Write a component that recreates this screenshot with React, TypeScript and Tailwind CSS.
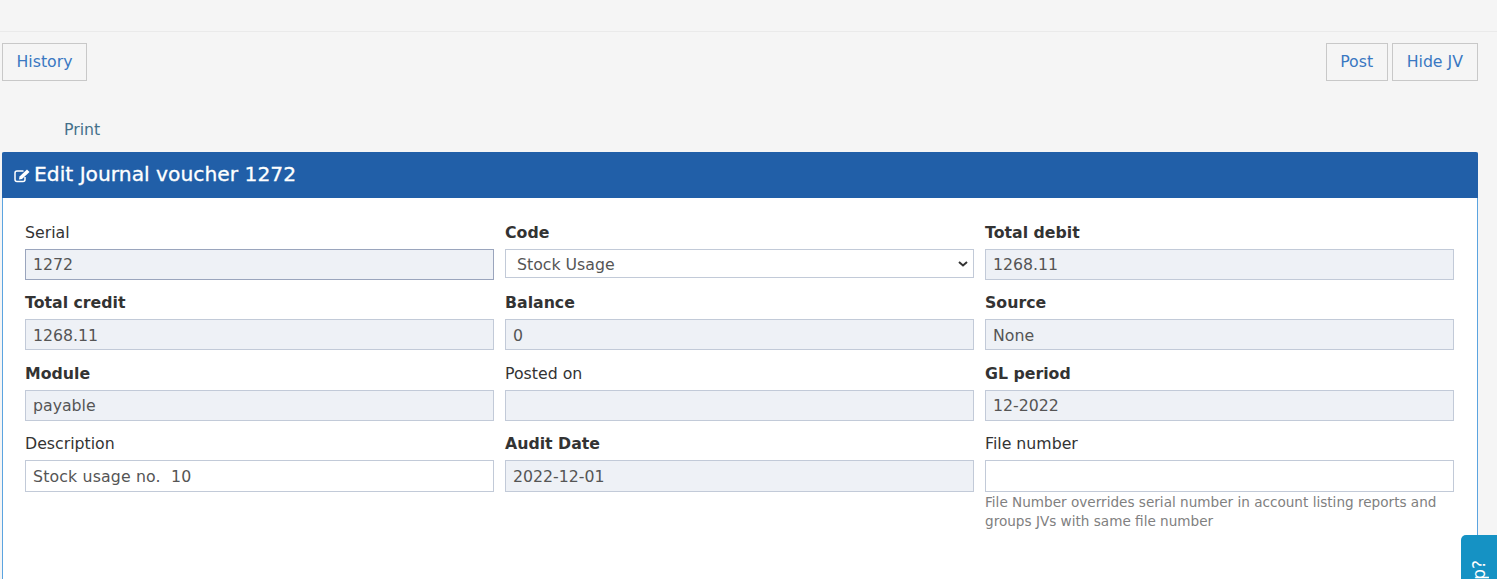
const F = "font-['DejaVu_Sans',sans-serif]";

function Btn({ children, wide }: { children: string; wide?: boolean }) {
  return (
    <button
      className={`h-[38px] border border-[#c8c8c8] text-[15.75px] leading-[20px] text-[#3a78c2] ${
        wide ? "px-[14px]" : "px-[13.5px]"
      }`}
    >
      {children}
    </button>
  );
}

function Label({ text, bold }: { text: string; bold?: boolean }) {
  return (
    <div className={`h-[19px] text-[15.75px] leading-[19px] text-[#333] ${bold ? "font-bold" : ""}`}>{text}</div>
  );
}

function Ro({ text, dark, tall }: { text: string; dark?: boolean; tall?: boolean }) {
  return (
    <div
      className={`mt-[7px] flex items-center border bg-[#eef1f6] px-[7px] text-[15.75px] text-[#555] ${
        tall ? "h-[32px] pt-[0.8px]" : "h-[31px] pt-[1.2px]"
      } ${dark ? "border-[#9aa5bd]" : "border-[#c2cad8]"}`}
    >
      {text}
    </div>
  );
}

function Field({
  label,
  bold,
  value,
  dark,
  tall,
}: {
  label: string;
  bold?: boolean;
  value: string;
  dark?: boolean;
  tall?: boolean;
}) {
  return (
    <div>
      <Label text={label} bold={bold} />
      <Ro text={value} dark={dark} tall={tall} />
    </div>
  );
}

function EditIcon() {
  return (
    <svg width="16" height="14" viewBox="0 0 16 14" fill="none" className="mr-[4px] mt-[4px] shrink-0">
      <path d="M11 8v2.5a2 2 0 0 1-2 2H3a2 2 0 0 1-2-2V4a2 2 0 0 1 2-2h6.5" stroke="#fff" strokeWidth="1.5" />
      <path d="M5.5 7.5 13 .5l2.5 2.5-7.5 7-3 .6z" fill="#fff" />
    </svg>
  );
}

export default function App() {
  return (
    <div className={`${F} relative h-[579px] w-[1497px] overflow-hidden bg-[#f5f5f5]`}>
      <div className="h-[32px] border-b border-[#eaeaea]" />
      <div className="flex justify-between pl-[2px] pr-[19px] pt-[11px]">
        <Btn>History</Btn>
        <div className="flex gap-[4px]">
          <Btn>Post</Btn>
          <Btn wide>Hide JV</Btn>
        </div>
      </div>
      <div className="mt-[39px] h-[32px] pl-[64px] text-[15.75px] leading-[20px] text-[#44708a]">Print</div>
      <div className="ml-[2px] h-[500px] w-[1476px] rounded-t-[2px] border border-t-0 border-[#5ba4e0] bg-white">
        <div className="-mx-px flex h-[46px] items-center rounded-t-[2px] bg-[#215fa8] pb-[2px] pl-[12px] text-[20.25px] font-medium text-white [-webkit-text-stroke:0.3px_white]">
          <EditIcon />
          <span>Edit Journal voucher 1272</span>
        </div>
        <div className="grid grid-cols-[469px_469px_469px] gap-x-[11px] gap-y-[13.5px] pl-[22px] pt-[24.8px]">
          <Field label="Serial" value="1272" dark />
          <div>
            <Label text="Code" bold />
            <div className="relative mt-[7px] flex h-[29px] items-center border border-[#c2cad8] bg-white pl-[11px] pt-[4px] text-[15.75px] text-[#555]">
              Stock Usage
              <svg width="10" height="6" viewBox="0 0 10 6" fill="none" className="absolute right-[5px] top-[11px]">
                <path d="M1 1l4 3.5L9 1" stroke="#333" strokeWidth="2" />
              </svg>
            </div>
          </div>
          <Field label="Total debit" bold value="1268.11" />
          <Field label="Total credit" bold value="1268.11" />
          <Field label="Balance" bold value="0" />
          <Field label="Source" bold value="None" />
          <Field label="Module" bold value="payable" />
          <Field label="Posted on" value="" />
          <Field label="GL period" bold value="12-2022" />
          <div>
            <Label text="Description" />
            <div className="mt-[7px] flex h-[32px] items-center border border-[#c2cad8] bg-white px-[7px] pt-[0.8px] text-[15.75px] tracking-[0.15px] text-[#555]">
              Stock usage no.&nbsp; 10
            </div>
          </div>
          <Field label="Audit Date" bold value="2022-12-01" tall />
          <div>
            <Label text="File number" />
            <div className="mt-[7px] h-[32px] border border-[#c2cad8] bg-white" />
            <p className="mt-[1px] text-[13.6px] leading-[19px] text-[#808080]">
              File Number overrides serial number in account listing reports and groups JVs with same file number
            </p>
          </div>
        </div>
      </div>
      <div className="absolute left-[1461px] top-[535px] flex h-[80px] w-[36px] justify-center rounded-tl-[5px] bg-[#1592c4] pt-[25px]">
        <span className="rotate-180 self-start text-[17px] leading-[18px] text-white [writing-mode:vertical-rl]">Help?</span>
      </div>
    </div>
  );
}
